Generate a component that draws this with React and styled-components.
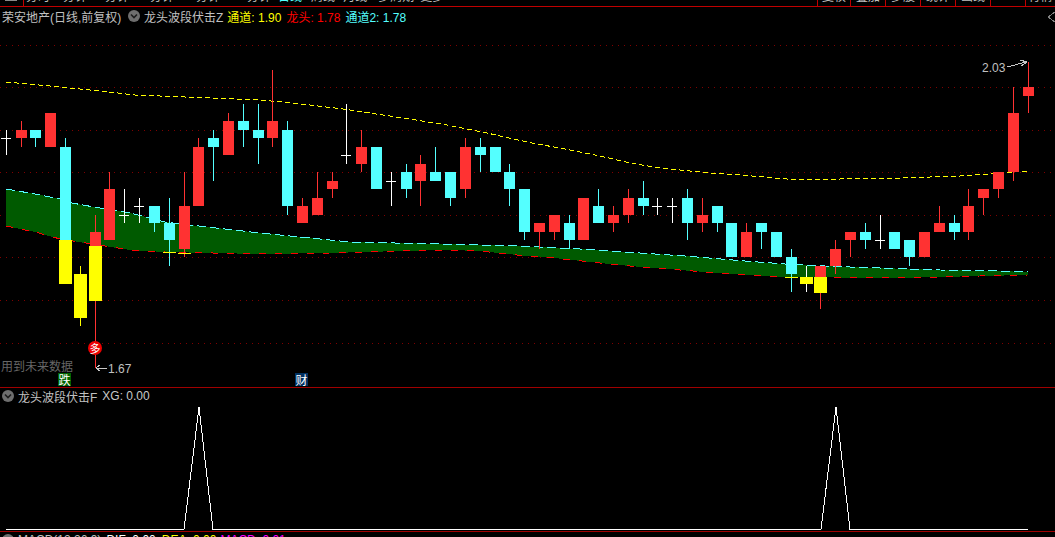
import React from "react";
import styled, { createGlobalStyle } from "styled-components";

//Price data, page pixels: [kind, wickTop, bodyTop, bodyBottom, wickBottom, wickColor]
const candles = [
	["w", 130, 138, 138, 155],
	["r", 121, 130, 138, 147],
	["c", 130, 130, 138, 147],
	["r", 113, 113, 147, 147],
	["c", 138, 147, 240, 240],
	["y", 266, 274, 318, 326],
	["r", 215, 232, 246, 368],
	["r", 172, 189, 240, 240],
	["w", 189, 215, 215, 223],
	["w", 198, 206, 206, 223],
	["c", 206, 206, 223, 232],
	["c", 198, 223, 240, 266],
	["r", 172, 206, 249, 257],
	["r", 138, 147, 206, 206],
	["c", 130, 138, 147, 181],
	["r", 113, 121, 155, 155],
	["c", 104, 121, 130, 147],
	["c", 104, 130, 138, 164],
	["r", 70, 121, 138, 147],
	["c", 121, 130, 206, 215],
	["r", 198, 206, 223, 223],
	["r", 172, 198, 215, 215],
	["r", 172, 181, 189, 198],
	["w", 104, 155, 155, 164],
	["r", 130, 147, 164, 172],
	["c", 147, 147, 189, 189],
	["w", 172, 181, 181, 206],
	["c", 164, 172, 189, 198],
	["r", 155, 164, 181, 206],
	["c", 147, 172, 181, 181],
	["c", 172, 172, 198, 206],
	["r", 138, 147, 189, 198],
	["c", 138, 147, 155, 172],
	["c", 147, 147, 172, 172],
	["c", 164, 172, 189, 206],
	["c", 189, 189, 232, 240],
	["r", 223, 223, 232, 249],
	["r", 215, 215, 232, 240],
	["c", 215, 223, 240, 249],
	["r", 198, 198, 240, 240],
	["c", 189, 206, 223, 223],
	["r", 206, 215, 223, 232],
	["r", 189, 198, 215, 223],
	["c", 181, 198, 206, 215],
	["w", 198, 206, 206, 215],
	["w", 198, 206, 206, 223],
	["c", 189, 198, 223, 240],
	["r", 198, 215, 223, 232],
	["c", 206, 206, 223, 232],
	["c", 223, 223, 257, 257],
	["r", 223, 232, 257, 257],
	["c", 223, 223, 232, 249],
	["c", 232, 232, 257, 257],
	["c", 249, 257, 274, 292],
	["y", 266, 277, 284, 292, "#ffffff"],
	["r", 266, 266, 277, 309],
	["r", 240, 249, 266, 274],
	["r", 232, 232, 240, 257],
	["c", 223, 232, 240, 249],
	["w", 215, 240, 240, 249],
	["c", 232, 232, 249, 249],
	["c", 240, 240, 257, 266],
	["r", 232, 232, 257, 257],
	["r", 206, 223, 232, 232],
	["c", 215, 223, 232, 240],
	["r", 189, 206, 232, 240],
	["r", 189, 189, 198, 215],
	["r", 172, 172, 189, 198],
	["r", 87, 113, 172, 181],
	["r", 62, 87, 96, 113],
];

//Yellow warning bars laid over some candles: [candle index, top, bottom]
const warnings = [
	[4, 240, 284],
	[6, 246, 301],
	[11, 252, 253],
	[12, 253, 254],
	[53, 277, 278],
	[55, 277, 293],
];

const bandTop = [
	[6, 189], [35, 194], [65, 200], [72, 203], [105, 209], [130, 213], [165, 222], [190, 225],
	[260, 233], [300, 237], [350, 242], [440, 244], [520, 246], [580, 249], [625, 252], [685, 256],
	[745, 261], [785, 264], [825, 266], [850, 267], [880, 268], [910, 269], [940, 270], [998, 271],
	[1028, 272],
];

const bandBottom = [
	[6, 226], [35, 232], [60, 239], [105, 246], [130, 250], [165, 252], [260, 254], [330, 253],
	[400, 251], [450, 250], [480, 251], [498, 253], [527, 256], [545, 257], [600, 263], [630, 266],
	[705, 272], [780, 277], [900, 278], [980, 276], [1028, 275],
];

const average = [
	[6, 82], [50, 86], [100, 91], [135, 95], [235, 99], [260, 100], [293, 103], [343, 109], [403, 118],
	[447, 125], [487, 133], [527, 142], [570, 150], [600, 156], [630, 163], [660, 168], [680, 170],
	[710, 173], [740, 175], [787, 179], [840, 179], [900, 178], [930, 177], [960, 176], [990, 174],
	[1003, 173], [1028, 171],
];

const gridLines = [45, 87, 130, 172, 215, 257, 300, 343];

const leftTabs = [
	{ label: "分时", gap: 2 },
	{ label: "分钟", gap: 13 },
	{ label: "分钟", gap: 18 },
	{ label: "分钟", gap: 21 },
	{ label: "分钟", gap: 22 },
	{ label: "分钟", gap: 27 },
	{ label: "日线", gap: 7, active: true },
	{ label: "周线", gap: 9 },
	{ label: "月线", gap: 8 },
	{ label: "多周期", gap: 11 },
	{ label: "更多", gap: 6 },
];

const rightTabs = ["复权", "叠加", "多股", "统计", "画线", "", "行情"];

const colors = { r: "#ff3232", c: "#54ffff", y: "#ffff00", w: "#ffffff" };

const toPoints = (list) => list.map(([x, y]) => `${x},${y}`).join(" ");
const bodyLeft = (i) => Math.round(0.8 + i * 14.81);

const Candle = ({ data, index }) => {
	const [kind, wickTop, bodyTop, bodyBottom, wickBottom, wickColor] = data;
	const left = bodyLeft(index);
	const fill = colors[kind];
	return (
		<g fill={fill}>
			<rect
				x={left + 5}
				y={wickTop}
				width="1"
				height={wickBottom - wickTop}
				fill={wickColor || fill}
			/>
			{kind === "w" ? (
				<rect x={left} y={bodyTop} width="10" height="1" />
			) : (
				<rect
					x={kind === "y" ? left - 1 : left}
					y={bodyTop}
					width={kind === "y" ? 13 : 11}
					height={bodyBottom - bodyTop}
				/>
			)}
		</g>
	);
};

const ChevronBadge = () => (
	<Badge viewBox="0 0 12 12">
		<circle cx="6" cy="6" r="6" fill="#6e6e6e" />
		<path d="M3 4.5 L6 7.5 L9 4.5" fill="none" stroke="#1c1c1c" strokeWidth="1.6" />
	</Badge>
);

const App = () => {
	return (
		<Screen>
			<GlobalStyle />
			<TopBar>
				<MenuCell>
					<MenuGrip />
				</MenuCell>
				{leftTabs.map((tab, i) => (
					<Tab key={i} $gap={tab.gap} $active={tab.active}>
						{tab.label}
					</Tab>
				))}
				<RightTabs>
					{rightTabs.map((label, i) => (
						<BoxTab key={i} $first={i === 0} $last={i === rightTabs.length - 1}>
							{label}
						</BoxTab>
					))}
				</RightTabs>
			</TopBar>

			<MainPane>
				<ChartSvg viewBox="0 7 1055 380" shapeRendering="crispEdges">
					{gridLines.map((y) => (
						<line key={y} x1="0" x2="1055" y1={y + 0.5} y2={y + 0.5} stroke="#800000" strokeDasharray="1 5" />
					))}
					<polygon points={toPoints([...bandTop, ...[...bandBottom].reverse()])} fill="#005a00" />
					<polyline points={toPoints(bandTop)} fill="none" stroke="#54ffff" strokeDasharray="9 4" />
					<polyline points={toPoints(bandBottom)} fill="none" stroke="#ff0000" strokeDasharray="7 9" />
					<polyline points={toPoints(average)} fill="none" stroke="#ffff00" strokeDasharray="5 3" />
					{candles.map((c, i) => (
						<Candle key={i} data={c} index={i} />
					))}
					{warnings.map(([i, top, bottom]) => (
						<rect key={i} x={bodyLeft(i) - 1} y={top} width="13" height={bottom - top} fill="#ffff00" />
					))}
					<g fill="none" stroke="#c8c8c8">
						<path d="M1007 67 L1026 62 M1020 60 L1027 62 L1021 66" />
						<path d="M107 368 L96 368 M100 365 L96 368 L100 371" />
					</g>
					<path d="M1055 12 L1048 17 L1055 22" fill="none" stroke="#808080" />
				</ChartSvg>

				<Legend>
					<StockName>荣安地产(日线,前复权)</StockName>
					<ChevronBadge />
					<IndicatorName $gap={4}>龙头波段伏击Z</IndicatorName>
					<Reading $color="#ffff00">通道: 1.90</Reading>
					<Reading $color="#ff0000">龙头: 1.78</Reading>
					<Reading $color="#54ffff">通道2: 1.78</Reading>
				</Legend>

				<PriceNote $x={982} $y={61}>2.03</PriceNote>
				<PriceNote $x={108} $y={362}>1.67</PriceNote>
				<BuyMark>多</BuyMark>
				<FutureNote>用到未来数据</FutureNote>
				<EventTag $x={58} $bg="#006400">跌</EventTag>
				<EventTag $x={295} $bg="#003060">财</EventTag>
			</MainPane>

			<SubPane>
				<ChartSvg viewBox="0 388 1055 143" shapeRendering="crispEdges">
					<polyline
						points="6,529.5 184,529.5 199,407 213,529.5 821,529.5 836,407 850,529.5 1028,529.5"
						fill="none"
						stroke="#ffffff"
					/>
				</ChartSvg>
				<SubLegend>
					<ChevronBadge />
					<IndicatorName $gap={5}>龙头波段伏击F</IndicatorName>
					<Reading $color="#c8c8c8">XG: 0.00</Reading>
				</SubLegend>
			</SubPane>

			<FootPane>
				<SubLegend>
					<ChevronBadge />
					<IndicatorName $gap={5}>MACD(12,26,9)</IndicatorName>
					<Reading $color="#ffffff" $gap={6}>DIF: 0.00</Reading>
					<Reading $color="#ffff00" $gap={4}>DEA: 0.00</Reading>
					<Reading $color="#ff00ff">MACD: 0.01</Reading>
				</SubLegend>
			</FootPane>
		</Screen>
	);
};

const GlobalStyle = createGlobalStyle`
	body {
		margin: 0;
		background: #000000;
		font-family: "Liberation Sans", "Noto Sans CJK SC", sans-serif;
		font-size: 12px;
	}
`;

const Screen = styled.div`
	width: 1055px;
	height: 537px;
	display: flex;
	flex-direction: column;
	overflow: hidden;
	background: #000000;
	color: #c0c0c0;
`;

const TopBar = styled.div`
	flex: none;
	height: 6px;
	display: flex;
	align-items: flex-end;
	border-bottom: 1px solid #c00000;
	overflow: hidden;
	line-height: 12px;
	color: #c0c0c0;
`;

const MenuCell = styled.div`
	flex: none;
	width: 23px;
	height: 6px;
	border-right: 1px solid #c00000;
`;

const MenuGrip = styled.div`
	width: 12px;
	height: 1px;
	margin-left: 5px;
	background: #8a8a8a;
`;

const Tab = styled.span`
	flex: none;
	margin-left: ${(p) => p.$gap}px;
	margin-bottom: 3px;
	color: ${(p) => (p.$active ? "#54ffff" : "#c0c0c0")};
`;

const RightTabs = styled.div`
	display: flex;
	margin-left: auto;
	height: 6px;
`;

const BoxTab = styled.span`
	flex: none;
	box-sizing: border-box;
	width: ${(p) => (p.$first ? 33 : p.$last ? 30 : 35)}px;
	height: 6px;
	display: flex;
	align-items: flex-end;
	justify-content: center;
	padding-bottom: 3px;
	border-left: 1px solid #c00000;
`;

const MainPane = styled.div`
	position: relative;
	flex: none;
	height: 380px;
	border-bottom: 1px solid #a00000;
`;

const SubPane = styled.div`
	position: relative;
	flex: none;
	height: 143px;
	border-bottom: 1px solid #a00000;
`;

const FootPane = styled.div`
	flex: 1;
	min-height: 0;
	overflow: hidden;
`;

const ChartSvg = styled.svg`
	position: absolute;
	top: 0;
	left: 0;
	width: 100%;
	height: 100%;
`;

const Legend = styled.div`
	position: relative;
	display: flex;
	align-items: center;
	height: 18px;
	padding-left: 2px;
	white-space: nowrap;
`;

const SubLegend = styled(Legend)`
	height: 16px;
`;

const StockName = styled.span`
	width: 126px;
	color: #c0c0c0;
`;

const Badge = styled.svg`
	flex: none;
	width: 12px;
	height: 12px;
	margin-right: 4px;
`;

const IndicatorName = styled.span`
	margin-right: ${(p) => p.$gap}px;
	color: #c0c0c0;
`;

const Reading = styled.span`
	margin-right: ${(p) => p.$gap ?? 5}px;
	color: ${(p) => p.$color};
`;

const PriceNote = styled.span`
	position: absolute;
	left: ${(p) => p.$x}px;
	top: ${(p) => p.$y - 7}px;
	line-height: 15px;
	color: #c0c0c0;
`;

const BuyMark = styled.span`
	position: absolute;
	left: 88px;
	top: 334px;
	width: 14px;
	height: 14px;
	display: flex;
	align-items: center;
	justify-content: center;
	border-radius: 50%;
	background: #ee0000;
	color: #ffffff;
	font-size: 11px;
`;

const FutureNote = styled.span`
	position: absolute;
	left: 1px;
	top: 352px;
	line-height: 16px;
	color: #666666;
`;

const EventTag = styled.span`
	position: absolute;
	left: ${(p) => p.$x}px;
	top: 366px;
	width: 13px;
	height: 13px;
	display: flex;
	align-items: center;
	justify-content: center;
	background: ${(p) => p.$bg};
	color: #ffffff;
`;

export default App;
